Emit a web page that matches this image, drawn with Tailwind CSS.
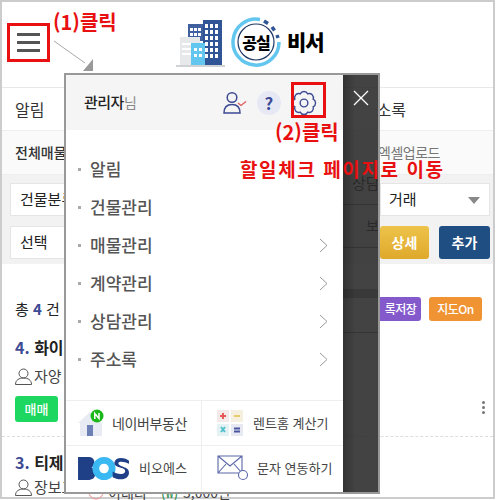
<!doctype html>
<html lang="ko">
<head>
<meta charset="utf-8" />
<meta name="viewport" content="width=device-width, initial-scale=1" />
<script src="https://cdn.jsdelivr.net/npm/@tailwindcss/browser@4"></script>
</head>
<body class="bg-white font-['Noto_Sans_CJK_KR','Noto_Sans',sans-serif]">
<div class="relative w-[496px] h-[500px] overflow-hidden">
	<div class="w-[495px] h-[499px] border-2 border-[#ccc] overflow-hidden bg-white text-[#333]">
		<!-- header -->
		<div class="h-[86px] flex items-start pl-[173px] pt-[15px] border-b border-[#e8e8e8]">
			<svg width="52" height="52" viewBox="0 0 52 52">
				<rect x="13" y="7" width="17" height="17" fill="#3f5f9f"/>
				<rect x="28" y="3" width="19" height="45" fill="#2f5597"/>
				<g fill="#fff">
					<rect x="30" y="7" width="3" height="4"/><rect x="35" y="7" width="3" height="4"/><rect x="40" y="7" width="3" height="4"/>
					<rect x="30" y="13" width="3" height="4"/><rect x="35" y="13" width="3" height="4"/><rect x="40" y="13" width="3" height="4"/>
					<rect x="30" y="19" width="3" height="4"/><rect x="35" y="19" width="3" height="4"/><rect x="40" y="19" width="3" height="4"/>
					<rect x="30" y="25" width="3" height="4"/><rect x="35" y="25" width="3" height="4"/><rect x="40" y="25" width="3" height="4"/>
					<rect x="30" y="31" width="3" height="4"/><rect x="35" y="31" width="3" height="4"/><rect x="40" y="31" width="3" height="4"/>
					<rect x="30" y="37" width="3" height="4"/><rect x="35" y="37" width="3" height="4"/><rect x="40" y="37" width="3" height="4"/>
					<rect x="15" y="11" width="3" height="3"/><rect x="19" y="11" width="3" height="3"/><rect x="23" y="11" width="3" height="3"/>
					<rect x="15" y="16" width="3" height="3"/><rect x="19" y="16" width="3" height="3"/><rect x="23" y="16" width="3" height="3"/>
				</g>
				<rect x="5" y="20" width="20" height="28" fill="#e6e8ea"/>
				<g fill="#fff"><rect x="7" y="26" width="9" height="2"/><rect x="7" y="31" width="9" height="2"/><rect x="7" y="36" width="9" height="2"/></g>
				<rect x="16" y="26" width="14" height="22" fill="#62c6ee"/>
				<g fill="#fff"><rect x="19" y="31" width="3" height="3"/><rect x="24" y="31" width="3" height="3"/><rect x="19" y="37" width="3" height="3"/><rect x="24" y="37" width="3" height="3"/></g>
				<rect x="1" y="48" width="49" height="2" fill="#cfd3d6"/>
			</svg>
			<div class="relative ml-[3px] mt-[-1px] w-[52px] h-[52px] flex items-center justify-center">
				<svg class="absolute inset-0" width="52" height="52" viewBox="0 0 52 52" fill="none">
					<path d="M30 3.500A23 23 0 1 0 49 26" stroke="#62c6ee" stroke-width="3.500"/>
					<path d="M34 5l4 2.500M42 11l2.500 3.500M47 19l1 3" stroke="#2f5597" stroke-width="3.500"/>
					<circle cx="26" cy="26" r="18" stroke="#1f3864" stroke-width="1.200"/>
				</svg>
				<span class="relative text-[16px] font-black text-black tracking-[-1px]">공실</span>
			</div>
			<span class="ml-[5px] mt-[9px] text-[21px] leading-[30px] font-black text-black tracking-[-1px]">비서</span>
		</div>
		<!-- tabs -->
		<div class="h-[43px] flex items-center justify-between pl-[13px] pr-[87px] border-b border-[#eee] text-[16px]">
			<span>알림</span><span>소록</span>
		</div>
		<!-- sub tabs -->
		<div class="h-[44px] flex items-center justify-between pl-[13px] pr-[53px] bg-[#fafafa] border-b border-[#eee] text-[14px]">
			<span class="font-medium">전체매물</span><span class="text-[#777] tracking-[-0.5px]">엑셀업로드</span>
		</div>
		<!-- filters -->
		<div class="h-[89px] bg-[#f2f2f2] pl-[8px] pr-[3px] pt-[8px] flex flex-col gap-[10px] text-[15px] text-[#222]">
			<div class="flex justify-between">
				<div class="w-[200px] h-[33px] bg-white border border-[#e5e5e5] flex items-center pl-[9px]">건물분류</div>
				<div class="relative w-[110px] h-[33px] bg-white border border-[#e5e5e5] flex items-center pl-[8px]">거래
					<span class="absolute right-[9px] top-[13px] w-0 h-0 border-x-[6px] border-x-transparent border-t-[7px] border-t-[#888]"></span>
				</div>
			</div>
			<div class="flex justify-between">
				<div class="w-[200px] h-[33px] bg-white border border-[#e5e5e5] flex items-center pl-[9px]">선택</div>
				<div class="flex gap-[10px] text-white font-bold text-[14px]">
					<div class="w-[49px] h-[33px] rounded-[3px] bg-gradient-to-b from-[#edc34a] to-[#dfa92a] flex items-center justify-center">상세</div>
					<div class="w-[51px] h-[33px] rounded-[3px] bg-[#1f4e82] flex items-center justify-center">추가</div>
				</div>
			</div>
		</div>
		<!-- list -->
		<div class="pl-[13px] pr-[8px]">
			<div class="h-[68px] flex items-center justify-between pt-[22px] pr-[3px]">
				<span class="text-[15px] text-[#222]">총 <b class="text-[#3d4a94] font-bold">4</b> 건</span>
				<div class="flex gap-[8px] text-white text-[12px] font-medium tracking-[-0.5px]">
					<span class="w-[41px] h-[24px] rounded-r-[3px] bg-[#8459cc] flex items-center justify-center">록저장</span>
					<span class="w-[53px] h-[24px] rounded-[3px] bg-[#f09433] flex items-center justify-center">지도On</span>
				</div>
			</div>
			<div class="text-[16px] font-bold text-[#222] leading-[24px] mt-[3px]"><span class="text-[#3d4a94]">4.</span> 화이트</div>
			<div class="flex items-center gap-[2px] mt-[7px] text-[15px] leading-[20px] text-[#444]">
				<svg width="17" height="17" viewBox="0 0 17 17" fill="none" stroke="#555" stroke-width="1"><circle cx="8.500" cy="5.500" r="4.500"/><path d="M.5 16.500c0-4.500 3.500-6.500 8-6.500s8 2 8 6.500z"/></svg>
				자양
			</div>
			<div class="flex justify-between mt-[10px]">
				<span class="w-[43px] h-[26px] rounded-[3px] bg-[#1ed760] text-white text-[13px] font-medium flex items-center justify-center">매매</span>
				<div class="flex flex-col gap-[2px] pt-[5px]">
					<i class="w-[3px] h-[3px] rounded-full bg-[#777]"></i><i class="w-[3px] h-[3px] rounded-full bg-[#777]"></i><i class="w-[3px] h-[3px] rounded-full bg-[#777]"></i>
				</div>
			</div>
		</div>
		<div class="mt-[14px] border-t border-dashed border-[#ddd]"></div>
		<div class="pl-[13px] pr-[8px]">
			<div class="text-[16px] font-bold text-[#222] leading-[24px] mt-[13px]"><span class="text-[#3d4a94]">3.</span> 티제이</div>
			<div class="flex items-center gap-[2px] mt-[3px] text-[15px] leading-[20px] text-[#444]">
				<svg width="17" height="17" viewBox="0 0 17 17" fill="none" stroke="#555" stroke-width="1"><circle cx="8.500" cy="5.500" r="4.500"/><path d="M.5 16.500c0-4.500 3.500-6.500 8-6.500s8 2 8 6.500z"/></svg>
				장보고
			</div>
		</div>
	</div>

	<!-- bits of the page that show around the modal -->
	<div class="absolute left-[88px] top-[484px] flex items-center text-[14px] leading-[16px] text-[#444]">
		<svg class="mr-[4px]" width="16" height="16" viewBox="0 0 16 16" fill="none" stroke="#e88" stroke-width="1"><circle cx="8" cy="8" r="7"/></svg>
		<span class="w-[53px]">이태리</span>
		<span class="w-[22px] text-[#2a8a4a]">(₩)</span><span>3,000만</span>
	</div>
	<span class="absolute left-[352px] top-[172px] text-[15px] leading-[22px] text-black">상담</span>
	<span class="absolute left-[366px] top-[215px] text-[14px] leading-[20px] text-black">보</span>

	<!-- menu modal -->
	<div class="absolute left-[64px] top-[73px] w-[316px] h-[421px] border-2 border-[#999] flex z-10">
		<div class="w-[277px] bg-white flex flex-col">
			<div class="h-[55px] shrink-0 bg-[#f5f5f5] flex items-center pl-[18px]">
				<span class="w-[57px] text-[15px] font-medium text-[#222] tracking-[-0.5px] whitespace-nowrap">관리자<span class="text-[#888] font-normal text-[14px]">님</span></span>
				<svg class="ml-[82px]" width="24" height="24" viewBox="0 0 24 24" fill="none">
					<circle cx="9" cy="6.500" r="4.800" stroke="#3d4a94" stroke-width="1.500"/>
					<path d="M1 22c0-6 3-8.500 8-8.500s8 2.500 8 8.500z" stroke="#3d4a94" stroke-width="1.500"/>
					<path d="M15 12l3 2.500 5-4" stroke="#e05a5a" stroke-width="1.300"/>
				</svg>
				<span class="ml-[10px] w-[24px] h-[24px] rounded-full bg-[#e6e8f4] flex items-center justify-center text-[#3d4a94] font-bold text-[17px]">?</span>
				<svg class="ml-[9px]" width="28" height="28" viewBox="0 0 24 24" fill="none" stroke="#3d4a94" stroke-width="1.200">
					<path d="M8.750 4.150A3.600 3.600 0 0 1 15.250 4.150A3.600 3.600 0 0 1 19.850 8.750A3.600 3.600 0 0 1 19.850 15.250A3.600 3.600 0 0 1 15.250 19.850A3.600 3.600 0 0 1 8.750 19.850A3.600 3.600 0 0 1 4.150 15.250A3.600 3.600 0 0 1 4.150 8.750A3.600 3.600 0 0 1 8.750 4.150z"/>
					<circle cx="12" cy="12" r="3.300"/>
				</svg>
			</div>
			<ul class="pt-[20px] flex-1 text-[17px] font-medium text-[#555]">
				<li class="h-[38px] flex items-center pl-[12px]"><i class="w-[3px] h-[3px] bg-[#aaa] mr-[9px]"></i>알림</li>
				<li class="h-[38px] flex items-center pl-[12px]"><i class="w-[3px] h-[3px] bg-[#aaa] mr-[9px]"></i>건물관리</li>
				<li class="h-[38px] flex items-center pl-[12px] pr-[15px]"><i class="w-[3px] h-[3px] bg-[#aaa] mr-[9px]"></i>매물관리
					<svg class="ml-auto" width="9" height="15" viewBox="0 0 9 15" fill="none" stroke="#999"><path d="M1 1l7 6.500-7 6.500"/></svg></li>
				<li class="h-[38px] flex items-center pl-[12px] pr-[15px]"><i class="w-[3px] h-[3px] bg-[#aaa] mr-[9px]"></i>계약관리
					<svg class="ml-auto" width="9" height="15" viewBox="0 0 9 15" fill="none" stroke="#999"><path d="M1 1l7 6.500-7 6.500"/></svg></li>
				<li class="h-[38px] flex items-center pl-[12px] pr-[15px]"><i class="w-[3px] h-[3px] bg-[#aaa] mr-[9px]"></i>상담관리
					<svg class="ml-auto" width="9" height="15" viewBox="0 0 9 15" fill="none" stroke="#999"><path d="M1 1l7 6.500-7 6.500"/></svg></li>
				<li class="h-[38px] flex items-center pl-[12px] pr-[15px]"><i class="w-[3px] h-[3px] bg-[#aaa] mr-[9px]"></i>주소록
					<svg class="ml-auto" width="9" height="15" viewBox="0 0 9 15" fill="none" stroke="#999"><path d="M1 1l7 6.500-7 6.500"/></svg></li>
			</ul>
			<div class="shrink-0 grid grid-cols-[136px_141px] grid-rows-[45px_44px] border-t border-[#eee] text-[13px] text-[#444] mb-[2px]">
				<div class="flex items-center pl-[12px] gap-[7px] border-r border-b border-[#eee] whitespace-nowrap">
					<svg width="27" height="28" viewBox="0 0 27 28">
						<path d="M0 14L12 3l12 11v13H2V14z" fill="#e8ebf3"/>
						<rect x="9" y="16" width="6" height="11" fill="#6d80b5"/>
						<circle cx="19" cy="7" r="6.500" fill="#1bb81b"/>
						<path d="M16.800 10V4.500L21 9.500V4" fill="none" stroke="#fff" stroke-width="1.500"/>
					</svg>
					<span class="text-[14px] tracking-[-0.4px]">네이버부동산</span>
				</div>
				<div class="flex items-center pl-[15px] gap-[10px] border-b border-[#eee] whitespace-nowrap">
					<svg width="26" height="26" viewBox="0 0 26 26">
						<rect width="12" height="12" fill="#f4eaea"/><rect x="14" width="12" height="12" fill="#f5f0df"/><rect y="14" width="12" height="12" fill="#e4f2f4"/><rect x="14" y="14" width="12" height="12" fill="#e6e8f2"/>
						<path d="M3 6h6M6 3v6" stroke="#e85a5a" stroke-width="2"/><path d="M17 6h6" stroke="#e8cd6a" stroke-width="2"/>
						<path d="M4 17l4 5M8 17l-4 5" stroke="#4fc0cc" stroke-width="2"/><path d="M17 18.500h6M17 21.500h6" stroke="#4a55a0" stroke-width="2"/>
					</svg>
					렌트홈 계산기
				</div>
				<div class="flex items-center pl-[12px] gap-[9px] border-r border-[#eee] whitespace-nowrap">
					<svg width="52" height="25" viewBox="0 0 54 26">
						<path d="M0 1h10c5 0 7 2 7 6 0 2-1 4-3 5 3 1 4 3 4 6 0 5-3 7-8 7H0z" fill="#1f3f86"/>
						<circle cx="27" cy="13" r="8.500" fill="none" stroke="#3ab8f2" stroke-width="7"/>
						<path d="M53 5c-3-3-13-5-15 1-2 7 12 5 11 10-1 4-9 3-13 0v6c5 3 16 4 17-4 1-8-12-6-11-11 1-2 7-1 11 1z" fill="#1f3f86"/>
					</svg>
					<span class="text-[13px]">비오에스</span>
				</div>
				<div class="flex items-center pl-[15px] gap-[7px] whitespace-nowrap">
					<svg width="33" height="26" viewBox="0 0 33 26" fill="none" stroke="#5a66a8" stroke-width="1.100">
						<path d="M1 1h24v17H1zM1 1l12 10L25 1M1 18l8-9M25 18l-8-9"/>
						<circle cx="26" cy="20" r="4.500" fill="#fff"/>
					</svg>
					문자 연동하기
				</div>
			</div>
		</div>
		<div class="relative w-[35px] bg-gradient-to-r from-[#1c1c1c]/90 to-[#2e2e2e]/90 to-35% flex flex-col items-center pt-[15px]">
			<svg width="16" height="16" viewBox="0 0 16 16" fill="none" stroke="#fff" stroke-width="1.300"><path d="M1 1l14 14M15 1L1 15"/></svg>
			<i class="absolute left-0 right-0 top-[129px] h-px bg-black/20"></i>
			<i class="absolute left-0 right-0 top-[172px] h-px bg-black/20"></i>
			<i class="absolute left-0 right-0 top-[214px] h-[9px] bg-black/15"></i>
			<i class="absolute left-0 right-0 top-[257px] h-px bg-black/20"></i>
		</div>
	</div>

	<!-- callouts -->
	<div class="absolute left-[7px] top-[23px] w-[43px] h-[39px] border-[3px] border-[#e81010] flex flex-col items-center justify-center gap-[5px] z-20">
		<i class="w-[23px] h-[3px] bg-[#555]"></i><i class="w-[23px] h-[3px] bg-[#555]"></i><i class="w-[23px] h-[3px] bg-[#555]"></i>
	</div>
	<span class="absolute left-[53px] top-[8px] text-[20px] leading-[28px] font-bold text-[#e81010] z-20">(1)클릭</span>
	<svg class="absolute left-[50px] top-[38px] z-20" width="50" height="36" viewBox="0 0 50 36">
		<path d="M4 3l31 22" stroke="#aaa" stroke-width="1"/>
		<path d="M43 21v12H33z" fill="#999"/>
	</svg>
	<div class="absolute left-[291px] top-[82px] w-[35px] h-[36px] border-[3px] border-[#e81010] z-20"></div>
	<span class="absolute left-[275px] top-[118px] text-[20px] leading-[28px] font-bold text-[#e81010] z-20">(2)클릭</span>
	<span class="absolute left-[240px] top-[155px] text-[19px] leading-[28px] font-bold text-[#e81010] tracking-[1.6px] whitespace-nowrap z-20">할일체크 페이지로 이동</span>
</div>
</body>
</html>
